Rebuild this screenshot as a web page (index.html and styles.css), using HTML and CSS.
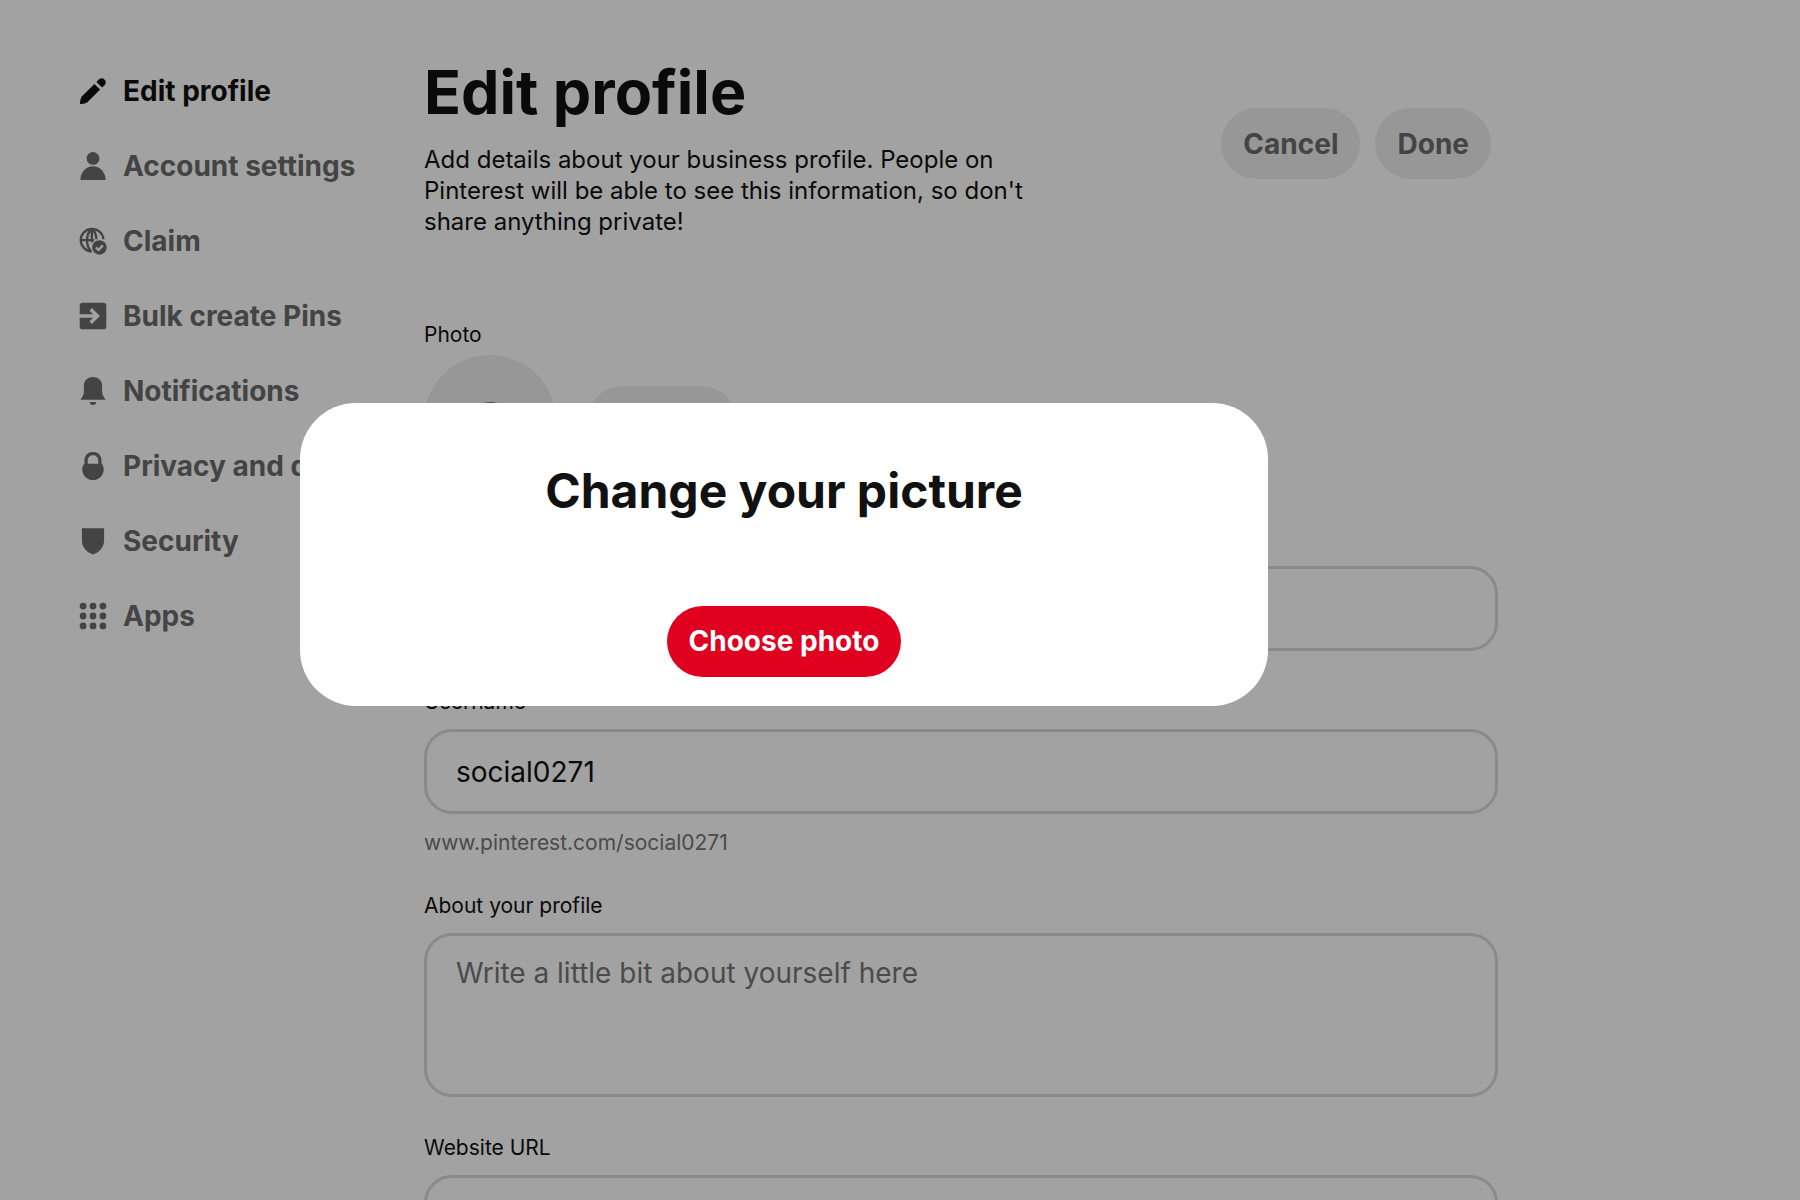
FILE: index.html
```html
<!DOCTYPE html>
<html lang="en">
<head>
<meta charset="utf-8">
<title>Edit profile</title>
<link rel="stylesheet" href="styles.css">
</head>
<body>
<div class="page">
  <nav class="sidebar" aria-label="Settings">
    <a class="nav-link active" href="#profile">
      <svg class="icon" viewBox="0 0 24 24"><path d="M13.200 5.900l4.900 4.900L7 21.900Q4.500 23.200.8 23.200q0-3.700 1.300-6.200zM14.900 4.200l2.300-2.300a3.500 3.500 0 0 1 4.900 4.900L19.800 9.100z"/></svg>
      <span>Edit profile</span>
    </a>
    <a class="nav-link" href="#account">
      <svg class="icon" viewBox="0 0 24 24"><circle cx="12" cy="5.500" r="5.500"/><path d="M1.200 24a10.800 11.800 0 0 1 21.600 0z"/></svg>
      <span>Account settings</span>
    </a>
    <a class="nav-link" href="#claim">
      <svg class="icon" viewBox="0 0 24 24"><g class="lines"><path d="M11 21A9.700 9.700 0 1 1 20.900 10.500M1.200 11.300H13M10.500 1.800C5.700 7 5.700 15.500 10.300 21M11.500 1.800C14 4.600 15 7.500 14.900 10.500M11 2V13"/></g><circle cx="17.500" cy="17.500" r="6.200"/><path class="cut" d="M14.600 17.700l2.100 2 3.800-3.900"/></svg>
      <span>Claim</span>
    </a>
    <a class="nav-link" href="#bulk">
      <svg class="icon" viewBox="0 0 24 24"><rect x=".6" y=".6" width="22.800" height="22.800" rx="2.500"/><path class="cut wide" d="M0 12H15M10 6.200L15.800 12 10 17.800"/></svg>
      <span>Bulk create Pins</span>
    </a>
    <a class="nav-link" href="#notifications">
      <svg class="icon" viewBox="0 0 24 24"><path d="M12 0c4.800 0 7.800 3.200 7.800 7.400v5.100c0 2.500 1.300 4.800 3 7.100H1.200c1.700-2.300 3-4.600 3-7.100V7.400C4.200 3.200 7.200 0 12 0zM9.200 21.400h5.600c0 1.600-1.200 2.600-2.800 2.600s-2.800-1-2.800-2.600z"/></svg>
      <span>Notifications</span>
    </a>
    <a class="nav-link" href="#privacy">
      <svg class="icon" viewBox="0 0 24 24"><path fill-rule="evenodd" d="M12 0c4.300 0 7.300 3 7.300 7v2.800c1.200 1.200 1.900 2.900 1.900 4.900 0 5.200-4 9.300-9.200 9.300s-9.200-4.100-9.200-9.300c0-2 .7-3.700 1.900-4.900V7c0-4 3-7 7.300-7zm0 2.700C9.500 2.700 7.500 4.500 7.500 7v3h9V7c0-2.500-2-4.300-4.500-4.300z"/></svg>
      <span>Privacy and data</span>
    </a>
    <a class="nav-link" href="#security">
      <svg class="icon" viewBox="0 0 24 24"><path d="M2.500 1h19v10.500c0 5.700-4.200 10.300-9.500 12-5.300-1.700-9.500-6.300-9.500-12z"/></svg>
      <span>Security</span>
    </a>
    <a class="nav-link" href="#apps">
      <svg class="icon" viewBox="0 0 24 24"><circle cx="3.500" cy="3.500" r="2.900"/><circle cx="12" cy="3.500" r="2.900"/><circle cx="20.500" cy="3.500" r="2.900"/><circle cx="3.500" cy="12" r="2.900"/><circle cx="12" cy="12" r="2.900"/><circle cx="20.500" cy="12" r="2.900"/><circle cx="3.500" cy="20.500" r="2.900"/><circle cx="12" cy="20.500" r="2.900"/><circle cx="20.500" cy="20.500" r="2.900"/></svg>
      <span>Apps</span>
    </a>
  </nav>

  <main class="content">
    <header class="header">
      <div class="intro">
        <h1 class="title">Edit profile</h1>
        <p class="lead">Add details about your business profile. People on Pinterest will be able to see this information, so don't share anything private!</p>
      </div>
      <div class="actions">
        <button class="button" type="button">Cancel</button>
        <button class="button" type="button">Done</button>
      </div>
    </header>

    <form class="form">
      <div class="photo">
        <span class="label">Photo</span>
        <div class="photo-row">
          <div class="avatar">S</div>
          <button class="button" type="button">Change</button>
        </div>
      </div>
      <div class="field">
        <label class="label" for="name">Name</label>
        <input class="input" id="name" type="text">
      </div>
      <div class="field">
        <label class="label" for="username">Username</label>
        <input class="input" id="username" type="text" value="social0271">
        <p class="hint">www.pinterest.com/social0271</p>
      </div>
      <div class="field">
        <label class="label" for="about">About your profile</label>
        <textarea class="input area" id="about" placeholder="Write a little bit about yourself here"></textarea>
      </div>
      <div class="field">
        <label class="label" for="website">Website URL</label>
        <input class="input" id="website" type="url">
      </div>
    </form>
  </main>
</div>

<div class="overlay">
  <div class="modal" role="dialog" aria-modal="true" aria-labelledby="modal-title">
    <h2 class="modal-title" id="modal-title">Change your picture</h2>
    <button class="button primary" type="button">Choose photo</button>
  </div>
</div>
</body>
</html>
```
FILE: styles.css
```css
* {
  box-sizing: border-box;
}

body {
  margin: 0;
  height: 100vh;
  overflow: hidden;
  background: #fff;
  color: #111;
  font-family: Inter, "Liberation Sans", sans-serif;
}

h1,
h2,
p {
  margin: 0;
}

.page {
  display: flex;
  padding: 56px 302px 56px 79px;
}

/* Sidebar */
.sidebar {
  flex: 0 0 345px;
  display: flex;
  flex-direction: column;
  gap: 39px;
  padding-top: 17px;
}

.nav-link {
  display: flex;
  align-items: center;
  gap: 16px;
  color: #6b6b6b;
  font-size: 28px;
  line-height: 36px;
  font-weight: 700;
  text-decoration: none;
  white-space: nowrap;
}

.nav-link.active {
  color: #111;
}

.icon {
  flex: none;
  width: 28px;
  height: 28px;
  fill: currentColor;
}

.lines {
  fill: none;
  stroke: currentColor;
  stroke-width: 2;
}

.cut {
  fill: none;
  stroke: #fff;
  stroke-width: 2;
}

.cut.wide {
  stroke-width: 3;
}

/* Main column */
.content {
  flex: 1;
  min-width: 0;
}

.header {
  display: flex;
  justify-content: space-between;
  align-items: flex-start;
  margin-bottom: 86px;
}

.intro {
  max-width: 624px;
}

.title {
  font-size: 61px;
  line-height: 72px;
  font-weight: 700;
  margin-bottom: 16px;
}

.lead {
  font-size: 24px;
  line-height: 31px;
}

.actions {
  display: flex;
  gap: 15px;
  padding: 52px 7px 0 0;
}

.button {
  height: 71px;
  padding: 0 22px;
  border: 0;
  border-radius: 36px;
  background: #eee;
  color: #6b6b6b;
  font-family: inherit;
  font-size: 28px;
  font-weight: 700;
}

.label {
  display: block;
  font-size: 21px;
  line-height: 24px;
}

.photo {
  display: grid;
  gap: 8px;
  margin-bottom: 40px;
}

.photo-row {
  display: flex;
  align-items: center;
  gap: 31px;
}

.avatar {
  display: grid;
  place-items: center;
  width: 132px;
  height: 132px;
  border-radius: 50%;
  background: #eee;
  color: #767676;
  font-size: 54px;
  font-weight: 600;
}

.field {
  margin-bottom: 39px;
}

.input {
  display: block;
  width: 100%;
  height: 85px;
  margin-top: 15px;
  padding: 0 29px;
  border: 3px solid #dadada;
  border-radius: 28px;
  background: transparent;
  color: #111;
  font-family: inherit;
  font-size: 28px;
  line-height: 36px;
}

.area {
  height: 164px;
  padding-top: 19px;
  resize: none;
}

.input::placeholder {
  color: #767676;
  opacity: 1;
}

.hint {
  margin-top: 17px;
  color: #767676;
  font-size: 21px;
  line-height: 24px;
}

/* Dialog */
.overlay {
  position: fixed;
  inset: 0;
  display: flex;
  align-items: center;
  justify-content: center;
  padding: 0 232px 92px 0;
  background: rgba(0, 0, 0, .365);
}

.modal {
  display: flex;
  flex-direction: column;
  align-items: center;
  gap: 87px;
  width: 968px;
  padding: 60px 32px 29px;
  border-radius: 56px;
  background: #fff;
}

.modal-title {
  font-size: 48px;
  line-height: 56px;
  font-weight: 700;
}

.primary {
  background: #e00020;
  color: #fff;
}
```
